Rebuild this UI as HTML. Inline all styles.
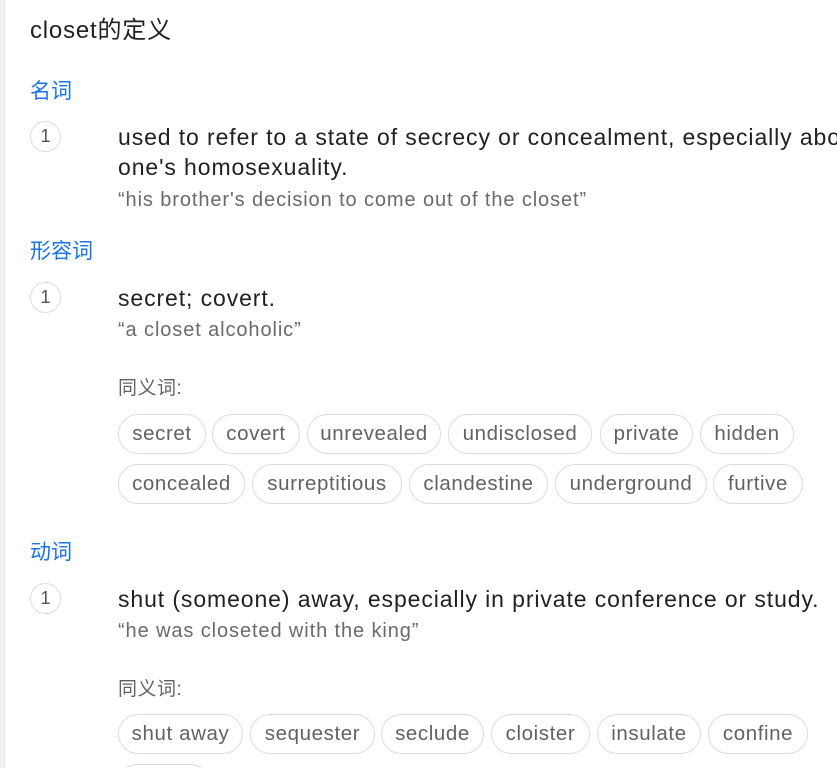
<!DOCTYPE html>
<html><head><meta charset="utf-8"><style>
*{margin:0;padding:0;box-sizing:border-box}
html,body{width:837px;height:768px;overflow:hidden}
body{background:#fff;font-family:"Liberation Sans","Noto Sans CJK SC",sans-serif;position:relative}
.bar{position:absolute;left:0;top:0;width:5px;height:768px;background:#f1f1f1;border-right:1px solid #e4e4e4}
.a{position:absolute;white-space:nowrap}
.t{font-size:24px;color:#222;letter-spacing:0.8px}
.pos{font-size:21px;color:#1a73e8}
.n{position:absolute;left:30px;width:31px;height:31px;border:1px solid #dadce0;border-radius:50%;font-size:18px;color:#555;text-align:center;line-height:29px}
.d{font-size:23px;color:#202124;line-height:30px;letter-spacing:0.9px}
.e{font-size:20px;color:#6a6a6a;letter-spacing:0.9px}
.s{font-size:19px;color:#5f6368;letter-spacing:0.5px}
.c{position:absolute;height:40px;border:1px solid #dadce0;border-radius:20px;font-size:20.5px;color:#5f6368;text-align:center;line-height:38px;letter-spacing:0.6px;white-space:nowrap;overflow:hidden}
</style></head><body>
<div class="bar"></div>
<div class="a t" style="left:30px;top:10px">closet的定义</div>
<div class="a pos" style="left:30px;top:75px">名词</div>
<div class="n" style="top:121px">1</div>
<div class="a d" style="left:118px;top:122px">used to refer to a state of secrecy or concealment, especially about<br>one's homosexuality.</div>
<div class="a e" style="left:118px;top:189px">“his brother's decision to come out of the closet”</div>
<div class="a pos" style="left:30px;top:235px">形容词</div>
<div class="n" style="top:282px">1</div>
<div class="a d" style="left:118px;top:283px">secret; covert.</div>
<div class="a e" style="left:118px;top:319px">“a closet alcoholic”</div>
<div class="a s" style="left:118px;top:373px">同义词:</div>
<div class="c" style="left:118px;top:414px;width:88px">secret</div>
<div class="c" style="left:212px;top:414px;width:88px">covert</div>
<div class="c" style="left:307px;top:414px;width:134px">unrevealed</div>
<div class="c" style="left:448px;top:414px;width:144px">undisclosed</div>
<div class="c" style="left:600px;top:414px;width:93px">private</div>
<div class="c" style="left:700px;top:414px;width:94px">hidden</div>
<div class="c" style="left:118px;top:464px;width:127px">concealed</div>
<div class="c" style="left:252px;top:464px;width:150px">surreptitious</div>
<div class="c" style="left:409px;top:464px;width:139px">clandestine</div>
<div class="c" style="left:555px;top:464px;width:152px">underground</div>
<div class="c" style="left:713px;top:464px;width:90px">furtive</div>
<div class="a pos" style="left:30px;top:536px">动词</div>
<div class="n" style="top:583px">1</div>
<div class="a d" style="left:118px;top:584px">shut (someone) away, especially in private conference or study.</div>
<div class="a e" style="left:118px;top:620px">“he was closeted with the king”</div>
<div class="a s" style="left:118px;top:674px">同义词:</div>
<div class="c" style="left:118px;top:714px;width:125px">shut away</div>
<div class="c" style="left:250px;top:714px;width:125px">sequester</div>
<div class="c" style="left:381px;top:714px;width:103px">seclude</div>
<div class="c" style="left:491px;top:714px;width:99px">cloister</div>
<div class="c" style="left:597px;top:714px;width:104px">insulate</div>
<div class="c" style="left:708px;top:714px;width:100px">confine</div>
<div class="c" style="left:118px;top:764px;width:92px"></div>
</body></html>
